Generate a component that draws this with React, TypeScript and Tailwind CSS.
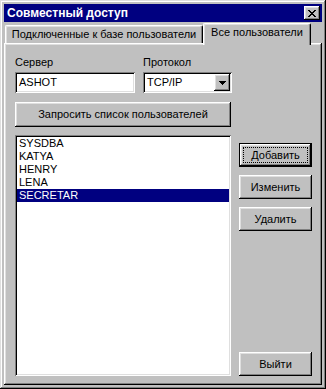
const raised =
    "shadow-[inset_-1px_-1px_#000,inset_1px_1px_#fff,inset_-2px_-2px_#808080,inset_2px_2px_#dfdfdf]";
const sunken =
    "shadow-[inset_1px_1px_#808080,inset_-1px_-1px_#fff,inset_2px_2px_#000,inset_-2px_-2px_#dfdfdf]";

const users = ["SYSDBA", "KATYA", "HENRY", "LENA", "SECRETAR"];

const CloseGlyph = () => (
    <svg width="8" height="7" viewBox="0 0 8 7" shapeRendering="crispEdges">
        <path
            fill="#000"
            d="M0 0h2v1H0zM6 0h2v1H6zM1 1h2v1H1zM5 1h2v1H5zM2 2h4v1H2zM3 3h2v1H3zM2 4h4v1H2zM1 5h2v1H1zM5 5h2v1H5zM0 6h2v1H0zM6 6h2v1H6z"
        />
    </svg>
);

const ArrowGlyph = () => (
    <svg width="7" height="4" viewBox="0 0 7 4" shapeRendering="crispEdges">
        <path fill="#000" d="M0 0h7v1H0zM1 1h5v1H1zM2 2h3v1H2zM3 3h1v1H3z" />
    </svg>
);

const Button = ({
    label,
    isDefault = false,
    className = "",
}: {
    label: string;
    isDefault?: boolean;
    className?: string;
}) =>
    isDefault ? (
        <div className={`border border-black bg-[#c0c0c0] ${className}`}>
            <div className={`h-full w-full p-[3px] ${raised}`}>
                <div className="flex h-full w-full items-center justify-center border border-dotted border-black">
                    {label}
                </div>
            </div>
        </div>
    ) : (
        <div
            className={`flex items-center justify-center bg-[#c0c0c0] ${raised} ${className}`}
        >
            {label}
        </div>
    );

export default function App() {
    return (
        <div
            className="w-[326px] h-[389px] bg-[#c0c0c0] p-[4px] flex flex-col text-[11px] leading-[13px] text-black shadow-[inset_-1px_-1px_#000,inset_1px_1px_#dfdfdf,inset_-2px_-2px_#808080,inset_2px_2px_#fff]"
            style={{ fontFamily: '"Liberation Sans", Arial, sans-serif' }}
        >
            {/* title bar */}
            <div className="h-[18px] bg-[#000080] flex items-center justify-between pl-[3px] pr-[2px]">
                <span className="text-white font-bold text-[12px]">
                    Совместный доступ
                </span>
                <div
                    className={`w-[16px] h-[14px] bg-[#c0c0c0] flex items-center justify-center ${raised}`}
                >
                    <CloseGlyph />
                </div>
            </div>

            {/* tabs */}
            <div className="mt-[1px] h-[20px] flex items-end">
                <div className="ml-[1px] w-[198px] h-[18px] flex justify-center pt-[2px] border-l border-t border-white border-r-black border-r rounded-tl-[2px] rounded-tr-[2px] shadow-[inset_-1px_0_#808080,inset_1px_1px_#dfdfdf]">
                    Подключенные к базе пользователи
                </div>
                <div className="relative z-10 mb-[-2px] w-[108px] h-[22px] bg-[#c0c0c0] flex justify-center pt-[2px] border-l border-t border-white border-r border-r-black rounded-tl-[2px] rounded-tr-[2px] shadow-[inset_-1px_0_#808080,inset_1px_1px_#dfdfdf]">
                    Все пользователи
                </div>
            </div>

            {/* panel */}
            <div className="flex-1 flex flex-col pl-[11px] pt-[13px] pb-[9px] shadow-[inset_-1px_-1px_#000,inset_1px_1px_#fff,inset_-2px_-2px_#808080,inset_2px_2px_#dfdfdf]">
                <div className="flex gap-[8px]">
                    <div className="flex flex-col gap-[3px] w-[120px]">
                        <span>Сервер</span>
                        <div
                            className={`h-[21px] bg-white flex items-center pl-[4px] ${sunken}`}
                        >
                            ASHOT
                        </div>
                    </div>
                    <div className="flex flex-col gap-[3px] w-[89px]">
                        <span>Протокол</span>
                        <div
                            className={`h-[21px] bg-white flex items-center p-[2px] ${sunken}`}
                        >
                            <span className="flex-1 pl-[2px]">TCP/IP</span>
                            <div
                                className={`w-[16px] h-[17px] bg-[#c0c0c0] flex items-center justify-center ${raised}`}
                            >
                                <ArrowGlyph />
                            </div>
                        </div>
                    </div>
                </div>

                <Button
                    label="Запросить список пользователей"
                    className="mt-[9px] w-[216px] h-[25px]"
                />

                <div className="mt-[8px] flex-1 flex">
                    <div className={`w-[216px] h-full bg-white p-[2px] ${sunken}`}>
                        {users.map((u, i) => (
                            <div
                                key={u}
                                className={`h-[13px] pl-[2px] ${
                                    i === users.length - 1
                                        ? "bg-[#000080] text-white"
                                        : ""
                                }`}
                            >
                                {u}
                            </div>
                        ))}
                    </div>
                    <div className="ml-[8px] w-[73px] flex flex-col pt-[8px] gap-[8px]">
                        <Button label="Добавить" isDefault className="h-[24px]" />
                        <Button label="Изменить" className="h-[24px]" />
                        <Button label="Удалить" className="h-[24px]" />
                        <Button label="Выйти" className="mt-auto h-[24px]" />
                    </div>
                </div>
            </div>
        </div>
    );
}
